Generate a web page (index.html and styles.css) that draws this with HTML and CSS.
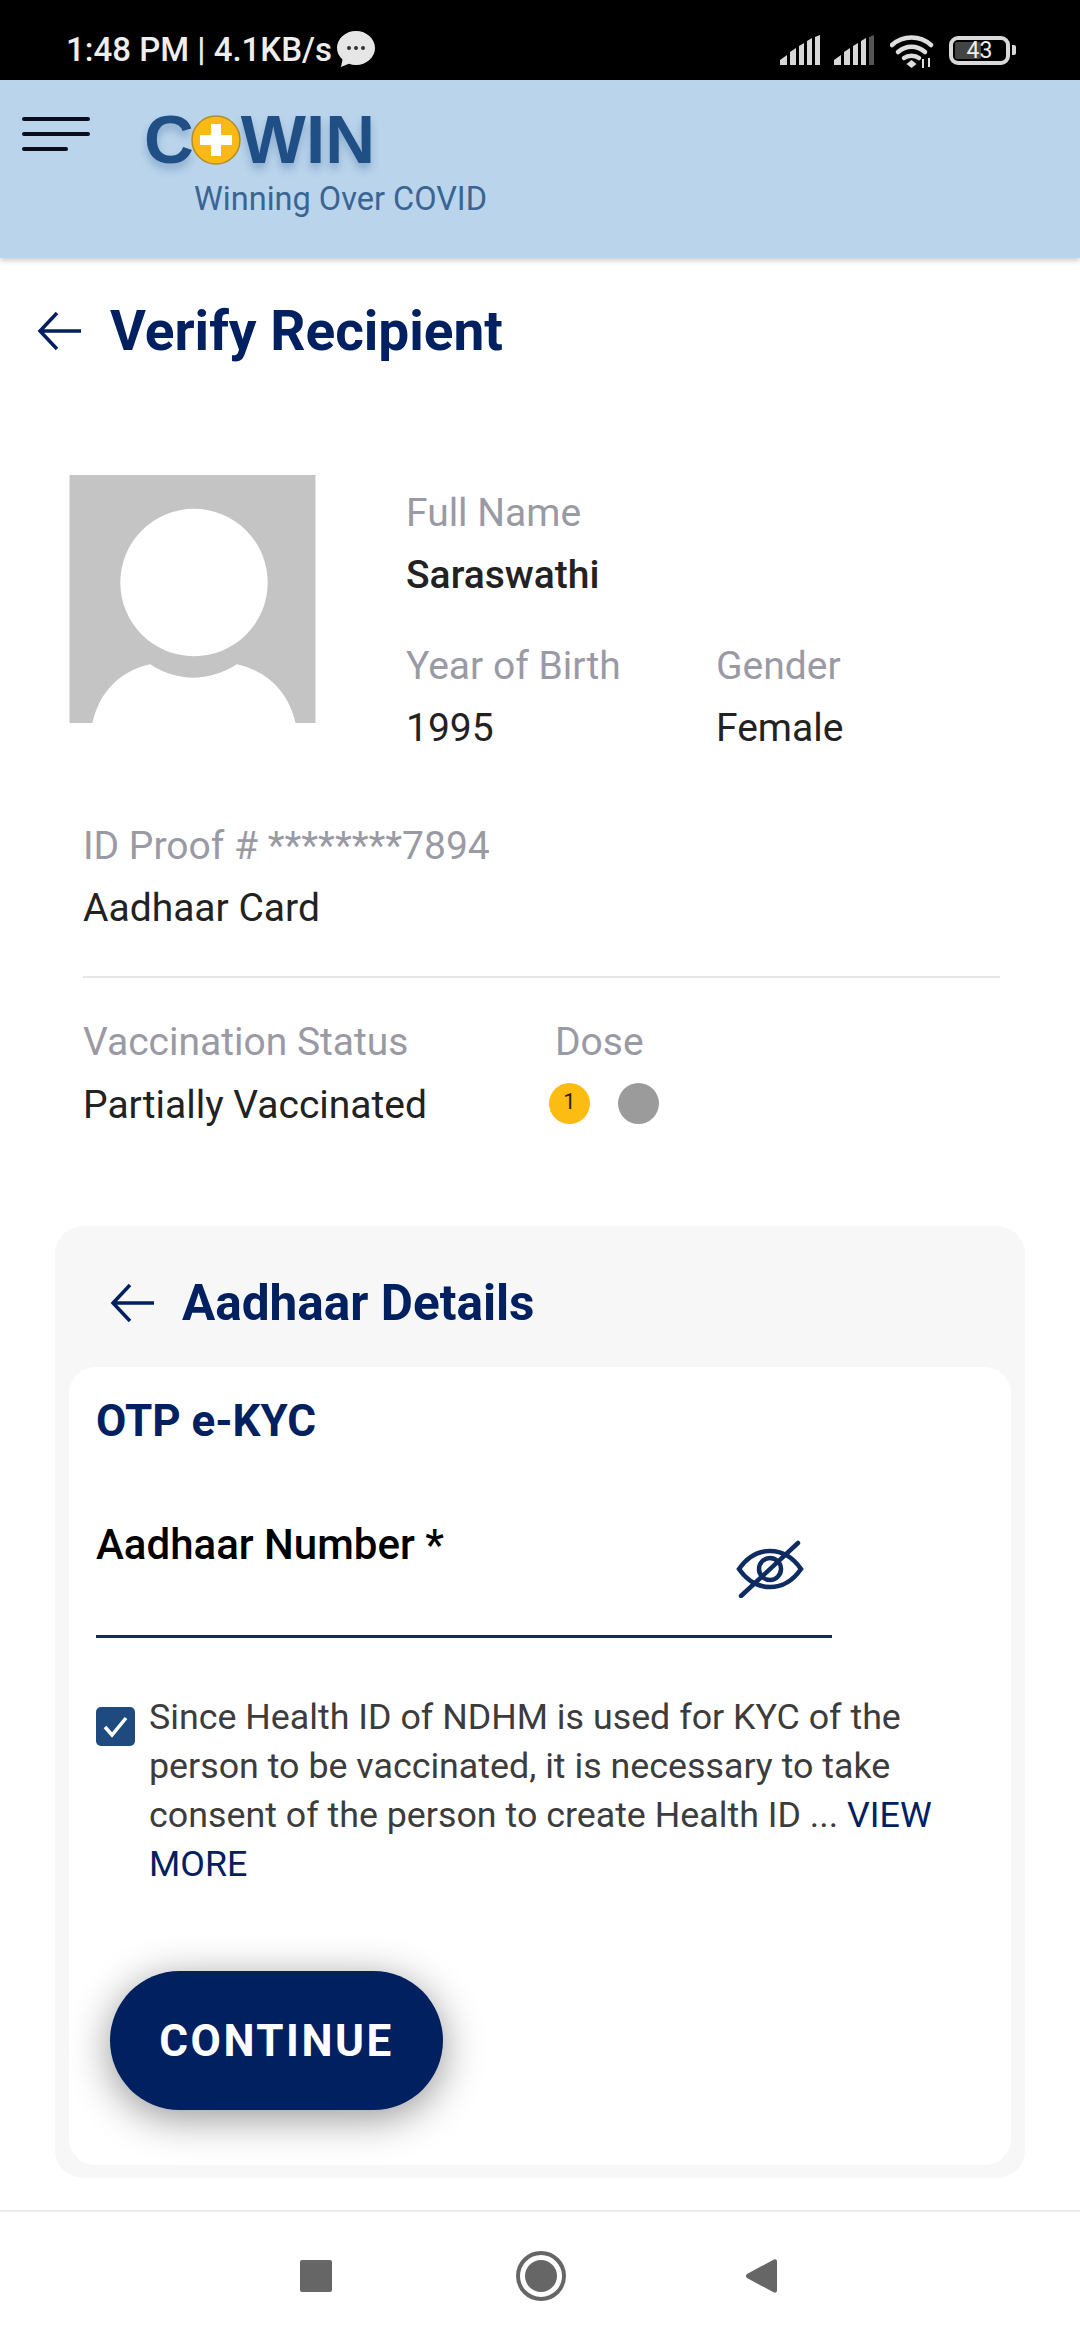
FILE: index.html
```html
<!DOCTYPE html>
<html lang="en">
<head>
<meta charset="utf-8">
<title>CoWIN - Verify Recipient</title>
<link rel="stylesheet" href="styles.css">
</head>
<body>
<div class="screen">
  <div class="statusbar">
    <div class="status-left">
      <span class="status-text">1:48 PM | 4.1KB/s</span>
      <svg class="bubble" viewBox="0 0 38 36"><path d="M19 0C29.5 0 38 7.6 38 17S29.5 34 19 34c-2.5 0-5-.4-7.200-1.200L4 36l1.500-7.500C2 25.400 0 21.400 0 17 0 7.600 8.500 0 19 0z" fill="#e6e6e6"/><circle cx="12" cy="17" r="2" fill="#333"/><circle cx="19" cy="17" r="2" fill="#333"/><circle cx="26" cy="17" r="2" fill="#333"/></svg>
    </div>
    <div class="status-right">
      <svg class="signal" viewBox="0 0 40 30"><path d="M0 30v-5l7-5v10zM10 30V17l6-4v17zM19 30V11l5-3v22zM27 30V6l5-3v27zM35 30V2l5-2v30z" fill="#d8d8d8"/></svg>
      <svg class="signal" viewBox="0 0 40 30"><path d="M0 30v-5l7-5v10zM10 30V17l6-4v17zM19 30V11l5-3v22zM27 30V6l5-3v27z" fill="#d8d8d8"/><path d="M35 30V2l5-2v30z" fill="#555"/></svg>
      <svg class="wifi" viewBox="0 0 44 34"><g fill="none" stroke="#dedede" stroke-width="4.500" stroke-linecap="round"><path d="M2 10C13 0 30 0 41 10"/><path d="M8 17C16 10 27 10 35 17"/><path d="M14 23C18 20 25 20 29 23"/></g><path d="M21.500 25l5 4-5 4-5-4z" fill="#dedede"/><path d="M33 24v9M39 23v9" stroke="#dedede" stroke-width="2"/></svg>
      <div class="battery"><span class="battery-fill"></span><span class="battery-num">43</span></div>
      <span class="battery-nub"></span>
    </div>
  </div>

  <header class="appbar">
    <div class="menu"><span class="menu-line"></span><span class="menu-line"></span><span class="menu-line short"></span></div>
    <div class="logo">
      <div class="logo-word">
        <span>C</span>
        <svg class="logo-plus" viewBox="0 0 50 50"><circle cx="25" cy="25" r="24" fill="#fbb917" stroke="#b08e2c" stroke-width="1.500"/><path d="M20 9h10v11h11v10H30v11H20V30H9V20h11z" fill="#fff"/></svg>
        <span>WIN</span>
      </div>
      <div class="logo-tag">Winning Over COVID</div>
    </div>
  </header>

  <main class="content">
    <div class="page-title">
      <svg class="arrow" viewBox="0 0 46 40"><path d="M44 20H3M20 2 3 20l17 18" fill="none" stroke="#012060" stroke-width="3.500"/></svg>
      <h1 class="title">Verify Recipient</h1>
    </div>

    <section class="profile">
      <svg class="avatar" viewBox="0 0 247 249"><rect width="247" height="249" fill="#c4c4c4"/><circle cx="125" cy="108" r="74" fill="#fff"/><path d="M23 249C30 218 50 197 81 190c28 18 58 18 87 0 31 7 52 28 59 59z" fill="#fff"/></svg>
      <div class="info">
        <div class="field">
          <div class="label">Full Name</div>
          <div class="value strong">Saraswathi</div>
        </div>
        <div class="info-row">
          <div class="field year">
            <div class="label">Year of Birth</div>
            <div class="value">1995</div>
          </div>
          <div class="field">
            <div class="label">Gender</div>
            <div class="value">Female</div>
          </div>
        </div>
      </div>
    </section>

    <section class="details">
      <div class="field">
        <div class="label">ID Proof # ********7894</div>
        <div class="value">Aadhaar Card</div>
      </div>
      <hr class="divider">
      <div class="vacc">
        <div class="field vacc-status">
          <div class="label">Vaccination Status</div>
          <div class="value lower">Partially Vaccinated</div>
        </div>
        <div class="field">
          <div class="label">Dose</div>
          <div class="doses"><span class="dot done">1</span><span class="dot"></span></div>
        </div>
      </div>
    </section>

    <section class="card">
      <div class="card-head">
        <svg class="arrow" viewBox="0 0 46 40"><path d="M44 20H3M20 2 3 20l17 18" fill="none" stroke="#012060" stroke-width="3.500"/></svg>
        <h2 class="card-title">Aadhaar Details</h2>
      </div>
      <div class="card-body">
        <h3 class="otp">OTP e-KYC</h3>
        <div class="input">
          <span class="input-label">Aadhaar Number *</span>
          <svg class="eye" viewBox="0 0 68 58"><g fill="none" stroke="#0f2c62" stroke-width="4.500" stroke-linecap="round"><path d="M3 29C12 16 23 11 34 11s22 5 31 18C56 42 45 47 34 47S12 42 3 29z"/><circle cx="34" cy="29" r="11"/><path d="M5 56 62 3"/></g></svg>
        </div>
        <div class="consent">
          <span class="check"><svg viewBox="0 0 39 39"><path d="M9 20l7 8L30 11" fill="none" stroke="#fff" stroke-width="3.500"/></svg></span>
          <div class="consent-text">
            <div class="consent-line">Since Health ID of NDHM is used for KYC of the</div>
            <div class="consent-line">person to be vaccinated, it is necessary to take</div>
            <div class="consent-line">consent of the person to create Health ID ... <span class="more">VIEW</span></div>
            <div class="consent-line more">MORE</div>
          </div>
        </div>
        <button class="cta">CONTINUE</button>
      </div>
    </section>
  </main>

  <nav class="navbar">
    <span class="nav-square"></span>
    <svg class="nav-home" viewBox="0 0 50 50"><circle cx="25" cy="25" r="23" fill="none" stroke="#666" stroke-width="4"/><circle cx="25" cy="25" r="16" fill="#666"/></svg>
    <svg class="nav-back" viewBox="0 0 32 36"><path d="M29 1.500 2 16c-1.500 1-1.500 3 0 4l27 14.500c1.500.5 3-.5 3-2V3.500c0-1.500-1.500-2.500-3-2z" fill="#666"/></svg>
  </nav>
</div>
</body>
</html>
```
FILE: styles.css
```css
* { box-sizing: border-box; }
html, body { margin: 0; padding: 0; background: #fff; }
body { font-family: Roboto, "Noto Sans", sans-serif; }
.screen { width: 1080px; height: 2340px; display: flex; flex-direction: column; overflow: hidden; }

.statusbar { height: 80px; flex: none; background: #000; display: flex; justify-content: space-between; padding: 20px 64px 0 66px; align-items: center; color: #eee; }
.status-left { display: flex; align-items: center; gap: 5px; }
.status-text { font-size: 33px; font-weight: 500; line-height: 40px; white-space: nowrap; }
.bubble { width: 38px; height: 36px; display: block; margin-top: -2px; }
.status-right { display: flex; align-items: center; height: 30px; }
.signal { width: 40px; height: 30px; display: block; margin-right: 14px; }
.signal + .wifi { margin-left: 2px; }
.wifi { width: 44px; height: 34px; margin-right: 15px; display: block; margin-top: 3px; }
.battery { position: relative; width: 61px; height: 29px; border: 4px solid #d9d9d9; border-radius: 9px; display: flex; align-items: center; justify-content: center; }
.battery-fill { position: absolute; left: 2px; top: 2px; bottom: 2px; width: 26px; background: #444; border-radius: 2px; }
.battery-num { position: relative; font-size: 23px; line-height: 21px; color: #eee; }
.battery-nub { width: 4px; height: 10px; background: #d9d9d9; margin-left: 2px; border-radius: 0 2px 2px 0; }

.appbar { height: 178px; flex: none; background: #bad4ec; box-shadow: 0 3px 5px rgba(0,0,0,.18); position: relative; padding: 37px 0 0 22px; display: flex; align-items: flex-start; }
.menu { width: 68px; display: flex; flex-direction: column; gap: 11px; }
.menu-line { display: block; height: 4px; background: #0a0d1c; border-radius: 2px; }
.menu-line.short { width: 46px; }
.logo { margin-left: 54px; }
.logo-word { display: flex; align-items: center; height: 50px; font-family: "Liberation Sans", Arial, sans-serif; font-weight: 700; font-size: 69px; line-height: 50px; color: #1f4f85; text-shadow: 0 6px 9px rgba(31,79,133,.3); margin-top: -2px; }
.logo-plus { width: 50px; height: 50px; margin-left: -3px; display: block; flex: none; }
.logo-tag { margin: 16px 0 0 50px; font-size: 32.500px; line-height: 36px; color: #3a6593; white-space: nowrap; }

.content { flex: 1; display: block; }
.page-title { display: flex; align-items: center; padding: 42px 0 0 37px; height: 104px; }
.arrow { width: 46px; height: 40px; display: block; flex: none; }
.title { margin: 0 0 0 27px; font-size: 55px; font-weight: 700; line-height: 62px; color: #012060; white-space: nowrap; }

.profile { display: flex; margin-top: 113px; padding-left: 69px; }
.avatar { width: 247px; height: 248px; display: block; flex: none; }
.info { margin: 13px 0 0 90px; }
.label { font-size: 39px; line-height: 50px; color: #9a9aa5; white-space: nowrap; }
.value { font-size: 39px; line-height: 50px; color: #222; margin-top: 12px; white-space: nowrap; }
.value.strong { font-weight: 500; }
.value.lower { margin-top: 13px; }
.info-row { display: flex; margin-top: 41px; }
.year { width: 310px; }

.details { margin-top: 68px; padding: 0 80px 0 83px; }
.divider { border: 0; height: 2px; background: #e6e6e6; margin: 43px 0 39px; }
.vacc { display: flex; }
.vacc-status { width: 472px; }
.doses { display: flex; gap: 28px; margin: 16px 0 0 -6px; }
.dot { width: 41px; height: 41px; border-radius: 50%; background: #9b9b9b; font-size: 22px; line-height: 38px; text-align: center; color: #222; }
.dot.done { background: #fdbc11; }

.card { margin: 96px 55px 0; height: 952px; background: #f7f7f7; border-radius: 28px; padding: 0 14px; }
.card-head { display: flex; align-items: center; height: 141px; padding: 12px 0 0 41px; }
.card-title { margin: 0 0 0 26px; font-size: 49.500px; font-weight: 700; line-height: 50px; color: #012060; white-space: nowrap; }
.card-body { background: #fff; border-radius: 26px; height: 798px; padding: 29px 0 0 27px; }
.otp { margin: 0; font-size: 44px; font-weight: 700; line-height: 50px; color: #012060; }
.input { width: 736px; height: 118px; margin-top: 74px; display: flex; justify-content: space-between; align-items: flex-start; padding-right: 28px; border-bottom: 3px solid #142a5c; }
.input-label { font-size: 42px; font-weight: 500; line-height: 50px; color: #000; white-space: nowrap; }
.eye { width: 68px; height: 58px; margin-top: 20px; display: block; }
.consent { display: flex; margin-top: 55px; padding-right: 50px; }
.check { width: 39px; height: 39px; margin: 14px 14px 0 0; background: #1f4a80; border-radius: 5px; flex: none; display: block; }
.check svg { display: block; width: 39px; height: 39px; }
.consent-text { font-size: 35.800px; line-height: 49px; color: #3c3c3c; }
.consent-line { white-space: nowrap; }
.more { color: #012060; }
.cta { display: block; width: 333px; height: 139px; margin: 82px 0 0 14px; border: 0; border-radius: 70px; background: #012060; color: #fff; font-family: Roboto, sans-serif; font-size: 44px; font-weight: 700; letter-spacing: 2.500px; box-shadow: 0 8px 40px rgba(0,0,0,.42); }

.navbar { height: 130px; flex: none; border-top: 2px solid #ececec; background: #fff; display: flex; align-items: center; padding-left: 300px; }
.nav-square { width: 32px; height: 32px; background: #666; border-radius: 2px; display: block; }
.nav-home { width: 50px; height: 50px; margin-left: 184px; display: block; }
.nav-back { width: 32px; height: 36px; margin-left: 179px; display: block; }
```
